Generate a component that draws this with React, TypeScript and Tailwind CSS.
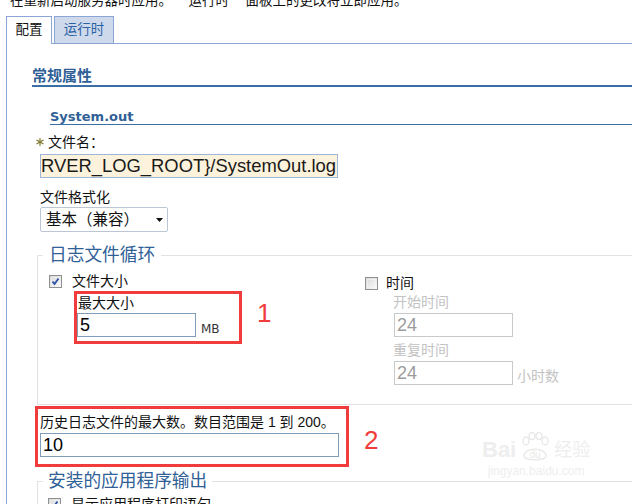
import React from "react";

function Check({ checked }: { checked?: boolean }) {
  return (
    <span className="relative inline-flex h-[13px] w-[13px] shrink-0 items-center justify-center border border-[#8f9091] bg-linear-to-br from-[#d8d8d8] to-[#fbfbfb]">
      <span className="absolute inset-[1px] border border-[#f4f4f4]/60" />
      {checked && (
        <svg width="11" height="11" viewBox="0 0 11 11" className="relative">
          <path d="M2.5 5.5 L4.5 8 L8.5 2.5" fill="none" stroke="#3050a8" strokeWidth="1.8" />
        </svg>
      )}
    </span>
  );
}

function Star() {
  return (
    <svg width="8" height="8" viewBox="0 0 8 8" className="mr-[4px] shrink-0">
      <g stroke="#7d7228" strokeWidth="1.1">
        <line x1="4" y1="0" x2="4" y2="8" />
        <line x1="0.5" y1="2" x2="7.5" y2="6" />
        <line x1="0.5" y1="6" x2="7.5" y2="2" />
      </g>
    </svg>
  );
}

export default function App() {
  return (
    <div className="relative h-[504px] w-[632px] overflow-hidden bg-white font-['Liberation_Sans','Noto_Sans_CJK_SC',sans-serif] text-[#111]">
      <div className="-mt-[9px] h-[25px] whitespace-nowrap pl-[10px] font-['Noto_Sans_CJK_SC',sans-serif] text-[13.5px] leading-[16px]">
        在重新启动服务器时应用。 “运行时” 面板上的更改将立即应用。
      </div>

      <div className="flex h-[27px] items-start gap-[2px] pl-[6px]">
        <div className="relative z-10 flex h-[28px] w-[46px] items-center justify-center border border-b-0 border-[#8ba6d6] bg-white pb-[1px] text-[13.5px]">
          配置
        </div>
        <div className="flex h-[27px] w-[60px] items-center justify-center border border-b-0 border-[#8ba6d6] bg-[#cfd9ec] text-[13.5px] text-[#2a63a3]">
          运行时
        </div>
      </div>

      <div className="ml-[6px] h-[461px] border-l border-t border-[#8ba6d6] pl-[25px] pt-[23px]">
        <div className="border-b-2 border-[#3a6ea6] text-[15px] font-bold leading-[18px] text-[#2f6096]">
          常规属性
        </div>
        <div className="ml-[18px] mt-[22px] border-b border-[#3a6ea6] font-['DejaVu_Sans',sans-serif] text-[13px] font-bold leading-[15px] text-[#2f6096]">
          System.out
        </div>

        <div className="ml-[4px] mt-[7px] flex items-center text-[14px] leading-[20px]">
          <Star />
          文件名：
        </div>
        <div className="ml-[8px] mt-[2px] h-[24px] w-[298px] overflow-hidden whitespace-nowrap border border-[#9fb7d6] bg-[#fdf3dc] font-['Liberation_Sans',sans-serif] text-[18.4px] leading-[22px] text-[#1a1a1a]">
          {"RVER_LOG_ROOT}/SystemOut.log"}
        </div>

        <div className="ml-[8px] mt-[10px] text-[14px] leading-[18px]">文件格式化</div>
        <div className="ml-[8px] mt-[1px] flex h-[25px] w-[128px] items-center justify-between rounded-[2px] border border-[#bcc6d4] bg-white pl-[5px] pr-[4px] text-[15.5px]">
          <span>基本（兼容）</span>
          <svg width="7" height="4" viewBox="0 0 7 4">
            <path d="M0 0 H7 L3.5 4 Z" fill="#111" />
          </svg>
        </div>

        <fieldset className="ml-[5px] mt-[13px] border border-r-0 border-[#e2e2e2]">
          <legend className="ml-[5px] px-[6px] text-[17.7px] leading-[20px] text-[#2f6096]">日志文件循环</legend>
          <div className="flex pb-[19px] pl-[11px] pt-[6px]">
            <div className="w-[316px]">
              <div className="flex h-[20px] items-center gap-[10px] text-[14px]">
                <Check checked />
                文件大小
              </div>
              <div className="ml-[25px] flex items-start gap-[15px]">
                <div className="w-[168px] border-[3px] border-[#f03c3c] pb-[4px]">
                  <div className="pl-[1px] text-[14px] leading-[18px]">最大大小</div>
                  <div className="mt-[1px] flex items-end gap-[5px]">
                    <div className="h-[24px] w-[119px] border border-[#7f9db9] bg-white pl-[2px] font-['Liberation_Sans',sans-serif] text-[18px] leading-[22px] text-black">
                      5
                    </div>
                    <span className="mb-[1px] font-['DejaVu_Sans',sans-serif] text-[12px] leading-[14px] text-[#333]">MB</span>
                  </div>
                </div>
                <span className="mt-[9px] font-['Liberation_Sans',sans-serif] text-[26px] leading-[26px] text-[#f03c3c]">1</span>
              </div>
            </div>

            <div className="mt-[2px]">
              <div className="flex h-[20px] items-center gap-[8px] text-[14px]">
                <Check />
                时间
              </div>
              <div className="ml-[29px] text-[14px] text-[#c3c3c3]">
                <div className="-ml-[1px] leading-[18px]">开始时间</div>
                <div className="mt-[2px] h-[24px] w-[119px] border border-[#c9c9c9] bg-white pl-[2px] font-['Liberation_Sans',sans-serif] text-[18px] leading-[22px] text-[#9c9c9c]">
                  24
                </div>
                <div className="-ml-[1px] mt-[4px] leading-[18px]">重复时间</div>
                <div className="mt-[2px] flex items-end gap-[4px]">
                  <div className="h-[24px] w-[119px] border border-[#c9c9c9] bg-white pl-[2px] font-['Liberation_Sans',sans-serif] text-[18px] leading-[22px] text-[#9c9c9c]">
                    24
                  </div>
                  <span className="leading-[18px]">小时数</span>
                </div>
              </div>
            </div>
          </div>
        </fieldset>

        <div className="ml-[3px] mt-[1px] flex items-start gap-[15px]">
          <div className="w-[314px] border-[3px] border-[#f03c3c] pb-[7px] pl-[2px] pt-[4px]">
            <div className="whitespace-nowrap text-[14px] leading-[18px]">历史日志文件的最大数。数目范围是 1 到 200。</div>
            <div className="mt-[2px] h-[24px] w-[299px] border border-[#7f9db9] bg-white pl-[2px] font-['Liberation_Sans',sans-serif] text-[18px] leading-[22px] text-black">
              10
            </div>
          </div>
          <span className="mt-[21px] font-['Liberation_Sans',sans-serif] text-[26px] leading-[26px] text-[#f03c3c]">2</span>
        </div>

        <fieldset className="ml-[5px] mt-[4px] h-[60px] border-l border-t border-[#e2e2e2]">
          <legend className="ml-[5px] px-[5px] text-[17.7px] leading-[20px] text-[#2f6096]">安装的应用程序输出</legend>
          <div className="mt-[3px] flex h-[20px] items-center gap-[10px] pl-[10px] text-[14px]">
            <Check checked />
            显示应用程序打印语句
          </div>
        </fieldset>
      </div>

      <div className="pointer-events-none absolute left-[482px] top-[432px] flex flex-col items-center text-[#eeeeee]">
        <div className="flex items-end gap-[2px]">
          <span className="font-['Liberation_Sans',sans-serif] text-[22px] font-bold leading-[24px]">Bai</span>
          <svg width="34" height="30" viewBox="0 0 34 30">
            <g fill="none" stroke="#eaeaea" strokeWidth="1.5">
              <ellipse cx="8" cy="9" rx="3" ry="4" />
              <ellipse cx="14" cy="4" rx="3" ry="3.5" />
              <ellipse cx="21" cy="4" rx="3" ry="3.5" />
              <ellipse cx="27" cy="9" rx="3" ry="4" />
              <path d="M6 24 C6 15 28 15 28 24 C28 29 6 29 6 24 Z" />
            </g>
            <text x="17" y="26" textAnchor="middle" fontSize="10" fill="#e8e8e8" fontFamily="Liberation Sans">du</text>
          </svg>
          <span className="text-[18px] leading-[24px]">经验</span>
        </div>
        <span className="mt-[2px] font-['Liberation_Sans',sans-serif] text-[12px] leading-[14px]">jingyan.baidu.com</span>
      </div>
    </div>
  );
}
